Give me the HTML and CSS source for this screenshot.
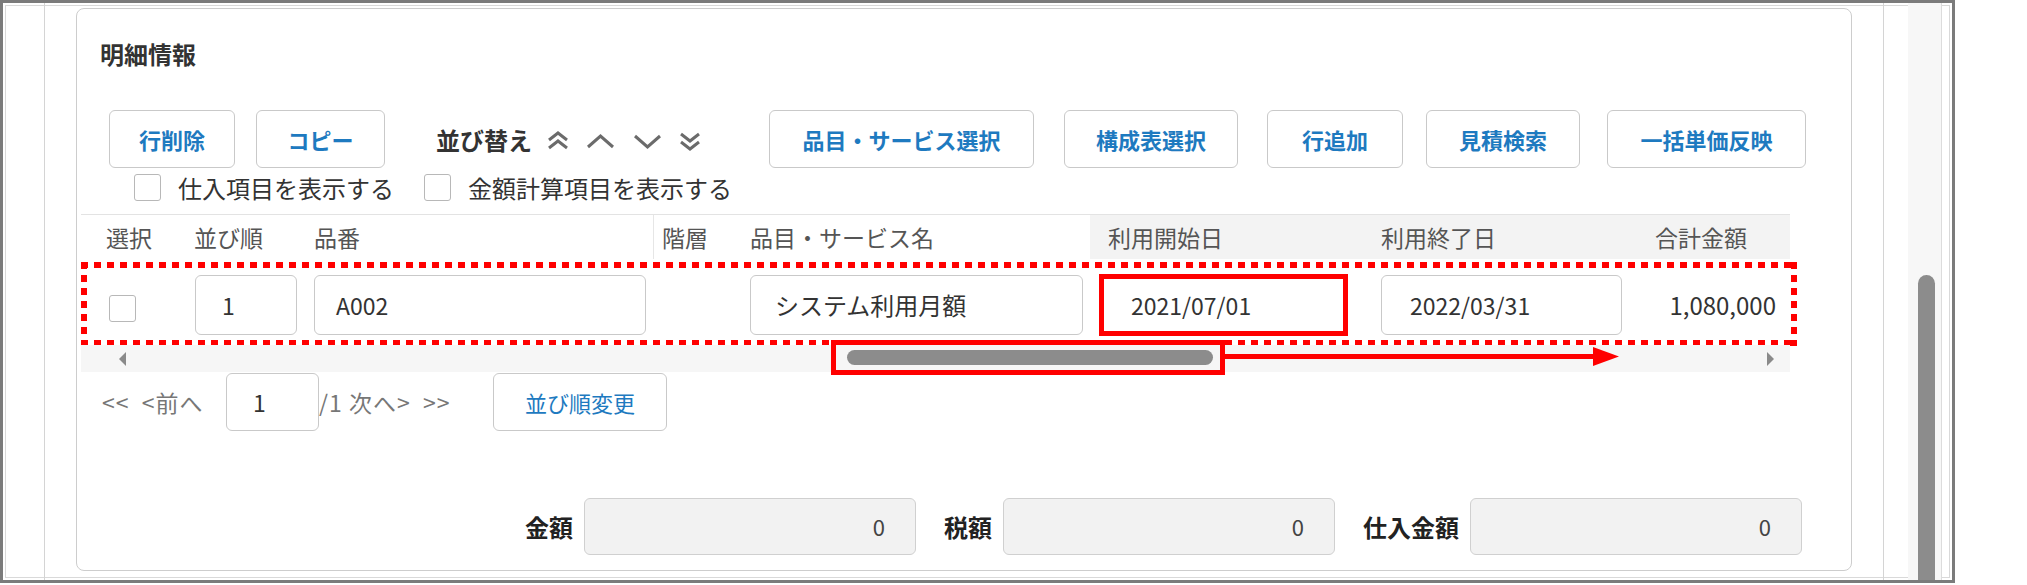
FILE: index.html
```html
<!DOCTYPE html>
<html lang="ja">
<head>
  <meta charset="UTF-8" />
  <meta name="viewport" content="width=device-width, initial-scale=1.0"/>
  <title>明細情報</title>
  <link rel="stylesheet" href="styles.css">
</head>
<body>
  <div class="window">
    <div class="gutter"></div>

    <div class="main">
      <section class="panel">
        <h2 class="panel-title">明細情報</h2>

        <!-- Toolbar -->
        <div class="toolbar">
          <button class="btn btn-del">行削除</button>
          <button class="btn btn-copy">コピー</button>
          <span class="sort-label">並び替え</span>
          <svg class="sort-icons" width="152" height="26" viewBox="0 0 152 26">
            <g fill="none" stroke="#6b6b6b" stroke-width="3">
              <path d="M1 12 L10 5 L19 12" />
              <path d="M1 20 L10 13 L19 20" />
              <path d="M40 19 L52.5 8 L65 19" />
              <path d="M87 8 L99.5 19 L112 8" />
              <path d="M133 6 L142 13 L151 6" />
              <path d="M133 14 L142 21 L151 14" />
            </g>
          </svg>
          <button class="btn btn-item">品目・サービス選択</button>
          <button class="btn btn-bom">構成表選択</button>
          <button class="btn btn-add">行追加</button>
          <button class="btn btn-quote">見積検索</button>
          <button class="btn btn-price">一括単価反映</button>
        </div>

        <div class="options">
          <label class="opt"><span class="check"></span>仕入項目を表示する</label>
          <label class="opt"><span class="check"></span>金額計算項目を表示する</label>
        </div>

        <!-- Detail grid -->
        <div class="grid">
          <div class="grid-head">
            <div class="th c-sel">選択</div>
            <div class="th c-ord">並び順</div>
            <div class="th c-code">品番</div>
            <div class="th c-lvl">階層</div>
            <div class="th c-name">品目・サービス名</div>
            <div class="th c-start shade">利用開始日</div>
            <div class="th c-end shade">利用終了日</div>
            <div class="th c-total shade">合計金額</div>
          </div>

          <div class="grid-row">
            <div class="td c-sel"><span class="check"></span></div>
            <div class="td c-ord"><div class="field">1</div></div>
            <div class="td c-code"><div class="field">A002</div></div>
            <div class="td c-lvl"></div>
            <div class="td c-name"><div class="field">システム利用月額</div></div>
            <div class="td c-start"><div class="field hl">2021/07/01</div></div>
            <div class="td c-end"><div class="field">2022/03/31</div></div>
            <div class="td c-total">1,080,000</div>
            <div class="mark-dots"></div>
          </div>

          <div class="hscroll">
            <span class="arrow-left"></span>
            <span class="hthumb"></span>
            <span class="arrow-right"></span>
            <div class="mark-box"></div>
            <svg class="mark-arrow" width="400" height="26" viewBox="0 0 400 26">
              <rect x="0" y="9" width="370" height="5" fill="#f00" />
              <polygon points="368,2 394,11.5 368,21" fill="#f00" />
            </svg>
          </div>
        </div>

        <div class="pager">
          <span class="pg-prev">&lt;&lt;&nbsp; &lt;前へ</span>
          <div class="pg-input">1</div>
          <span class="pg-next">/1 次へ&gt;&nbsp; &gt;&gt;</span>
          <button class="btn btn-sortchg">並び順変更</button>
        </div>

        <div class="totals">
          <span class="tot-label">金額</span>
          <div class="tot-field">0</div>
          <span class="tot-label">税額</span>
          <div class="tot-field">0</div>
          <span class="tot-label">仕入金額</span>
          <div class="tot-field">0</div>
        </div>
      </section>
    </div>

    <div class="side">
      <div class="vtrack"><div class="vthumb"></div></div>
    </div>
  </div>
</body>
</html>
```

FILE: styles.css
```css
* {
  box-sizing: border-box;
}

body {
  margin: 0;
  background: #fff;
  font-family: "Noto Sans CJK JP", "Noto Sans", sans-serif;
  color: #333;
}

.window {
  display: flex;
  width: 1955px;
  height: 583px;
  border: 3px solid #7b7b7b;
  box-shadow: inset 0 0 0 2px #fff, inset 0 0 0 3px #d9d9d9;
}

.gutter {
  flex: none;
  width: 42px;
  border-right: 1px solid #d4d4d4;
}

.main {
  flex: none;
  width: 1838px;
  padding: 5px 31px 0 31px;
}

.side {
  flex: none;
  width: 69px;
  border-left: 1px solid #d4d4d4;
}

.vtrack {
  margin-left: 24px;
  width: 34px;
  height: 100%;
  background: #f7f7f7;
  border-right: 1px solid #dcdcdc;
  padding: 272px 0 0 10px;
}

.vthumb {
  width: 17px;
  height: 100%;
  background: #8c8c8c;
  border-radius: 9px 9px 0 0;
}

/* Panel */
.panel {
  height: 563px;
  border: 1px solid #cdcdcd;
  border-radius: 8px;
  padding-left: 4px;
}

.panel-title {
  margin: 30px 0 0 19px;
  font-size: 24px;
  line-height: 30px;
  font-weight: 700;
  color: #333;
}

/* Toolbar */
.toolbar {
  display: flex;
  align-items: center;
  height: 58px;
  margin: 41px 0 0 28px;
}

.btn {
  flex: none;
  height: 58px;
  padding: 0;
  border: 1px solid #c9c9c9;
  border-radius: 6px;
  background: #fff;
  color: #1e7ac0;
  font-family: inherit;
  font-size: 22px;
  font-weight: 700;
}

.btn-del { width: 126px; }
.btn-copy { width: 129px; margin-left: 21px; }
.btn-item { width: 265px; margin-left: 69px; }
.btn-bom { width: 174px; margin-left: 30px; }
.btn-add { width: 136px; margin-left: 29px; }
.btn-quote { width: 154px; margin-left: 23px; }
.btn-price { width: 199px; margin-left: 27px; }

.sort-label {
  margin-left: 51px;
  font-size: 24px;
  font-weight: 700;
  color: #333;
}

.sort-icons {
  margin: 4px 0 0 16px;
}

/* Checkbox options */
.options {
  display: flex;
  align-items: center;
  height: 30px;
  margin: 4px 0 0 53px;
  font-size: 24px;
  color: #333;
}

.opt {
  display: flex;
  align-items: center;
  gap: 17px;
}

.opt + .opt {
  margin-left: 30px;
}

.check {
  display: inline-block;
  width: 27px;
  height: 27px;
  border: 1px solid #b8b8b8;
  border-radius: 3px;
  background: #fff;
}

/* Grid */
.grid {
  width: 1709px;
  margin-top: 12px;
  border-top: 1px solid #e3e3e3;
}

.grid-head,
.grid-row {
  display: grid;
  grid-template-columns: 102px 122px 348px 87px 350px 282px 268px 150px;
}

.grid-head {
  height: 44px;
  font-size: 23px;
  line-height: 44px;
  color: #555;
}

.th {
  white-space: nowrap;
}

.th.shade {
  background: #f3f3f3;
}

.th.c-sel { padding-left: 25px; }
.th.c-ord { padding-left: 11px; }
.th.c-code { padding-left: 9px; }
.th.c-lvl { padding-left: 8px; border-left: 1px solid #e6e6e6; }
.th.c-name { padding-left: 10px; }
.th.c-start { padding-left: 18px; }
.th.c-end { padding-left: 9px; }
.th.c-total { padding-left: 15px; }

.grid-row {
  position: relative;
  height: 86px;
  padding-top: 16px;
  align-items: start;
}

.td .check {
  margin: 20px 0 0 28px;
}

.field {
  height: 60px;
  border: 1px solid #c9c9c9;
  border-radius: 6px;
  background: #fff;
  font-size: 23px;
  line-height: 58px;
  color: #333;
  white-space: nowrap;
}

.c-ord .field { width: 102px; margin-left: 12px; padding-left: 26px; }
.c-code .field { width: 332px; margin-left: 9px; padding-left: 21px; }
.c-name .field { width: 333px; margin-left: 10px; padding-left: 24px; font-size: 24px; }
.c-end .field { width: 241px; margin-left: 9px; padding-left: 28px; }

.field.hl {
  width: 249px;
  height: 62px;
  margin: -1px 0 0 9px;
  padding-left: 27px;
  border: 5px solid #f00;
  border-radius: 0;
  line-height: 52px;
}

.td.c-total {
  padding-right: 14px;
  text-align: right;
  font-size: 24px;
  line-height: 60px;
  color: #333;
}

.mark-dots {
  position: absolute;
  left: 0;
  right: -7px;
  top: 3px;
  bottom: -1px;
  background:
    repeating-linear-gradient(90deg, #f00 0 7px, transparent 7px 13px) top left / 100% 6px no-repeat,
    repeating-linear-gradient(90deg, #f00 0 7px, transparent 7px 13px) bottom left / 100% 6px no-repeat,
    repeating-linear-gradient(180deg, #f00 0 7px, transparent 7px 13px) top left / 6px 100% no-repeat,
    repeating-linear-gradient(180deg, #f00 0 7px, transparent 7px 13px) top right / 6px 100% no-repeat;
}

/* Horizontal scroll */
.hscroll {
  position: relative;
  display: flex;
  align-items: center;
  height: 27px;
  padding: 0 16px 0 38px;
  background: #f6f6f6;
}

.arrow-left {
  border-top: 7px solid transparent;
  border-bottom: 7px solid transparent;
  border-right: 7px solid #8a8a8a;
}

.arrow-right {
  margin-left: auto;
  border-top: 7px solid transparent;
  border-bottom: 7px solid transparent;
  border-left: 7px solid #8a8a8a;
}

.hthumb {
  width: 366px;
  height: 15px;
  margin: -2px 0 0 721px;
  border-radius: 8px;
  background: #8c8c8c;
}

.mark-box {
  position: absolute;
  left: 750px;
  top: -5px;
  width: 394px;
  height: 35px;
  border: 5px solid #f00;
}

.mark-arrow {
  position: absolute;
  left: 1144px;
  top: 0;
}

/* Pager */
.pager {
  display: flex;
  align-items: center;
  height: 58px;
  margin: 1px 0 0 21px;
  font-size: 23px;
  letter-spacing: 1px;
  color: #777;
  white-space: nowrap;
}

.pg-prev {
  width: 124px;
}

.pg-next {
  width: 142px;
}

.pg-input {
  width: 93px;
  height: 58px;
  padding-left: 26px;
  border: 1px solid #c9c9c9;
  border-radius: 6px;
  line-height: 56px;
  color: #333;
}

.btn-sortchg {
  width: 174px;
  margin-left: 32px;
  font-weight: 400;
  letter-spacing: 0;
}

/* Totals */
.totals {
  display: flex;
  justify-content: flex-end;
  align-items: center;
  margin: 67px 49px 0 0;
}

.tot-label {
  margin: 0 11px 0 28px;
  font-size: 24px;
  font-weight: 700;
  color: #222;
}

.tot-field {
  width: 332px;
  height: 57px;
  padding-right: 30px;
  border: 1px solid #d0d0d0;
  border-radius: 6px;
  background: #f2f2f2;
  text-align: right;
  font-size: 22px;
  line-height: 55px;
  color: #444;
}
```
